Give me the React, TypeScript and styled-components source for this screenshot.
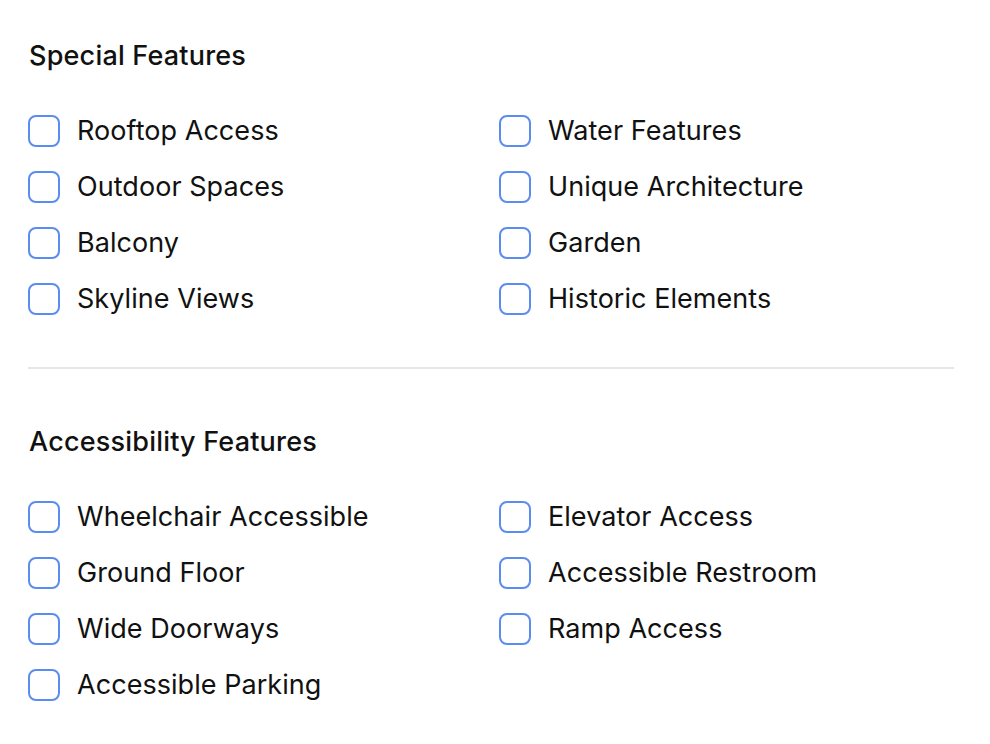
import React from 'react'
import styled, { createGlobalStyle } from 'styled-components'

const GlobalStyle = createGlobalStyle`
  html, body {
    margin: 0;
    padding: 0;
    background: #ffffff;
  }
  body {
    font-family: 'Inter', 'Roboto', 'Noto Sans', sans-serif;
    color: #111111;
    -webkit-font-smoothing: antialiased;
  }
`

const sections = [
  {
    title: 'Special Features',
    items: [
      'Rooftop Access',
      'Water Features',
      'Outdoor Spaces',
      'Unique Architecture',
      'Balcony',
      'Garden',
      'Skyline Views',
      'Historic Elements',
    ],
  },
  {
    title: 'Accessibility Features',
    items: [
      'Wheelchair Accessible',
      'Elevator Access',
      'Ground Floor',
      'Accessible Restroom',
      'Wide Doorways',
      'Ramp Access',
      'Accessible Parking',
    ],
  },
]

const App = () => {
  return (
    <>
      <GlobalStyle />
      <Page>
        {sections.map((section, i) => (
          <React.Fragment key={section.title}>
            {i > 0 && <Divider />}
            <Section>
              <Heading>{section.title}</Heading>
              <OptionGrid>
                {section.items.map((item) => (
                  <Option key={item}>
                    <Box type="checkbox" />
                    <span>{item}</span>
                  </Option>
                ))}
              </OptionGrid>
            </Section>
          </React.Fragment>
        ))}
      </Page>
    </>
  )
}

const Page = styled.main`
  display: flex;
  flex-direction: column;
  padding: 0 36px 0 28px;
`

const Section = styled.section`
  display: flex;
  flex-direction: column;
  padding: 40px 0 52px;
`

const Heading = styled.h2`
  margin: 0 0 43px 1px;
  font-size: 27px;
  line-height: 32px;
  font-weight: 500;
  letter-spacing: 0.2px;
  color: #111111;
`

const OptionGrid = styled.div`
  display: grid;
  grid-template-columns: 1fr 1fr;
  column-gap: 16px;
  row-gap: 24px;
`

const Option = styled.label`
  display: flex;
  align-items: center;
  gap: 17px;
  height: 32px;
  font-size: 27px;
  line-height: 32px;
  letter-spacing: 0.05px;
  color: #111111;
  cursor: pointer;
`

const Box = styled.input`
  appearance: none;
  margin: 0;
  width: 32px;
  height: 32px;
  flex-shrink: 0;
  border: 2px solid #5a8cf2;
  border-radius: 8px;
  background: #ffffff;
  box-sizing: border-box;
`

const Divider = styled.hr`
  margin: 0 0 17px;
  border: 0;
  height: 2px;
  background: #e6e6e6;
`

export default App
